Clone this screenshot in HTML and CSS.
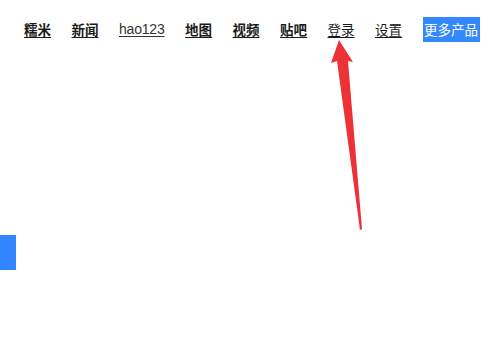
FILE: index.html
```html
<!DOCTYPE html>
<html lang="zh-CN">
<head>
<meta charset="utf-8">
<title>百度</title>
<link rel="stylesheet" href="styles.css">
</head>
<body>
<div class="top-nav">
  <a class="nav-link bold" href="#">糯米</a>
  <a class="nav-link bold" href="#">新闻</a>
  <a class="nav-link latin" href="#">hao123</a>
  <a class="nav-link bold" href="#">地图</a>
  <a class="nav-link bold" href="#">视频</a>
  <a class="nav-link bold" href="#">贴吧</a>
  <a class="nav-link" href="#">登录</a>
  <a class="nav-link" href="#">设置</a>
  <a class="more-btn" href="#">更多产品</a>
</div>
<div class="side-tab"></div>
<svg class="arrow" width="496" height="353" viewBox="0 0 496 353">
  <polygon points="339,40 353,62 348,61 362,229 360,230 337,61 331,63" fill="#ec3237"/>
</svg>
</body>
</html>
```
FILE: styles.css
```css
html, body {
  margin: 0;
  padding: 0;
  background: #ffffff;
}
body {
  width: 496px;
  height: 353px;
  position: relative;
  overflow: hidden;
  font-family: "Noto Sans CJK SC", "Liberation Sans", sans-serif;
}
.top-nav {
  display: flex;
  align-items: center;
  gap: 20.5px;
  padding: 17px 0 0 24px;
  height: 25px;
}
.nav-link {
  font-size: 13.5px;
  line-height: 25px;
  color: #1a1a1a;
  text-decoration: underline;
  text-underline-offset: 2px;
}
.nav-link.bold {
  font-weight: bold;
}
.nav-link.latin {
  font-family: "Liberation Sans", sans-serif;
  font-size: 14px;
  letter-spacing: -0.2px;
  color: #333;
}
.more-btn {
  display: block;
  width: 57px;
  height: 25px;
  line-height: 25px;
  background: #3388ff;
  color: #ffffff;
  font-size: 13.5px;
  text-align: center;
  text-decoration: none;
}
.side-tab {
  position: absolute;
  left: 0;
  top: 235px;
  width: 16px;
  height: 35px;
  background: #3385ff;
}
.arrow {
  position: absolute;
  left: 0;
  top: 0;
}
```
